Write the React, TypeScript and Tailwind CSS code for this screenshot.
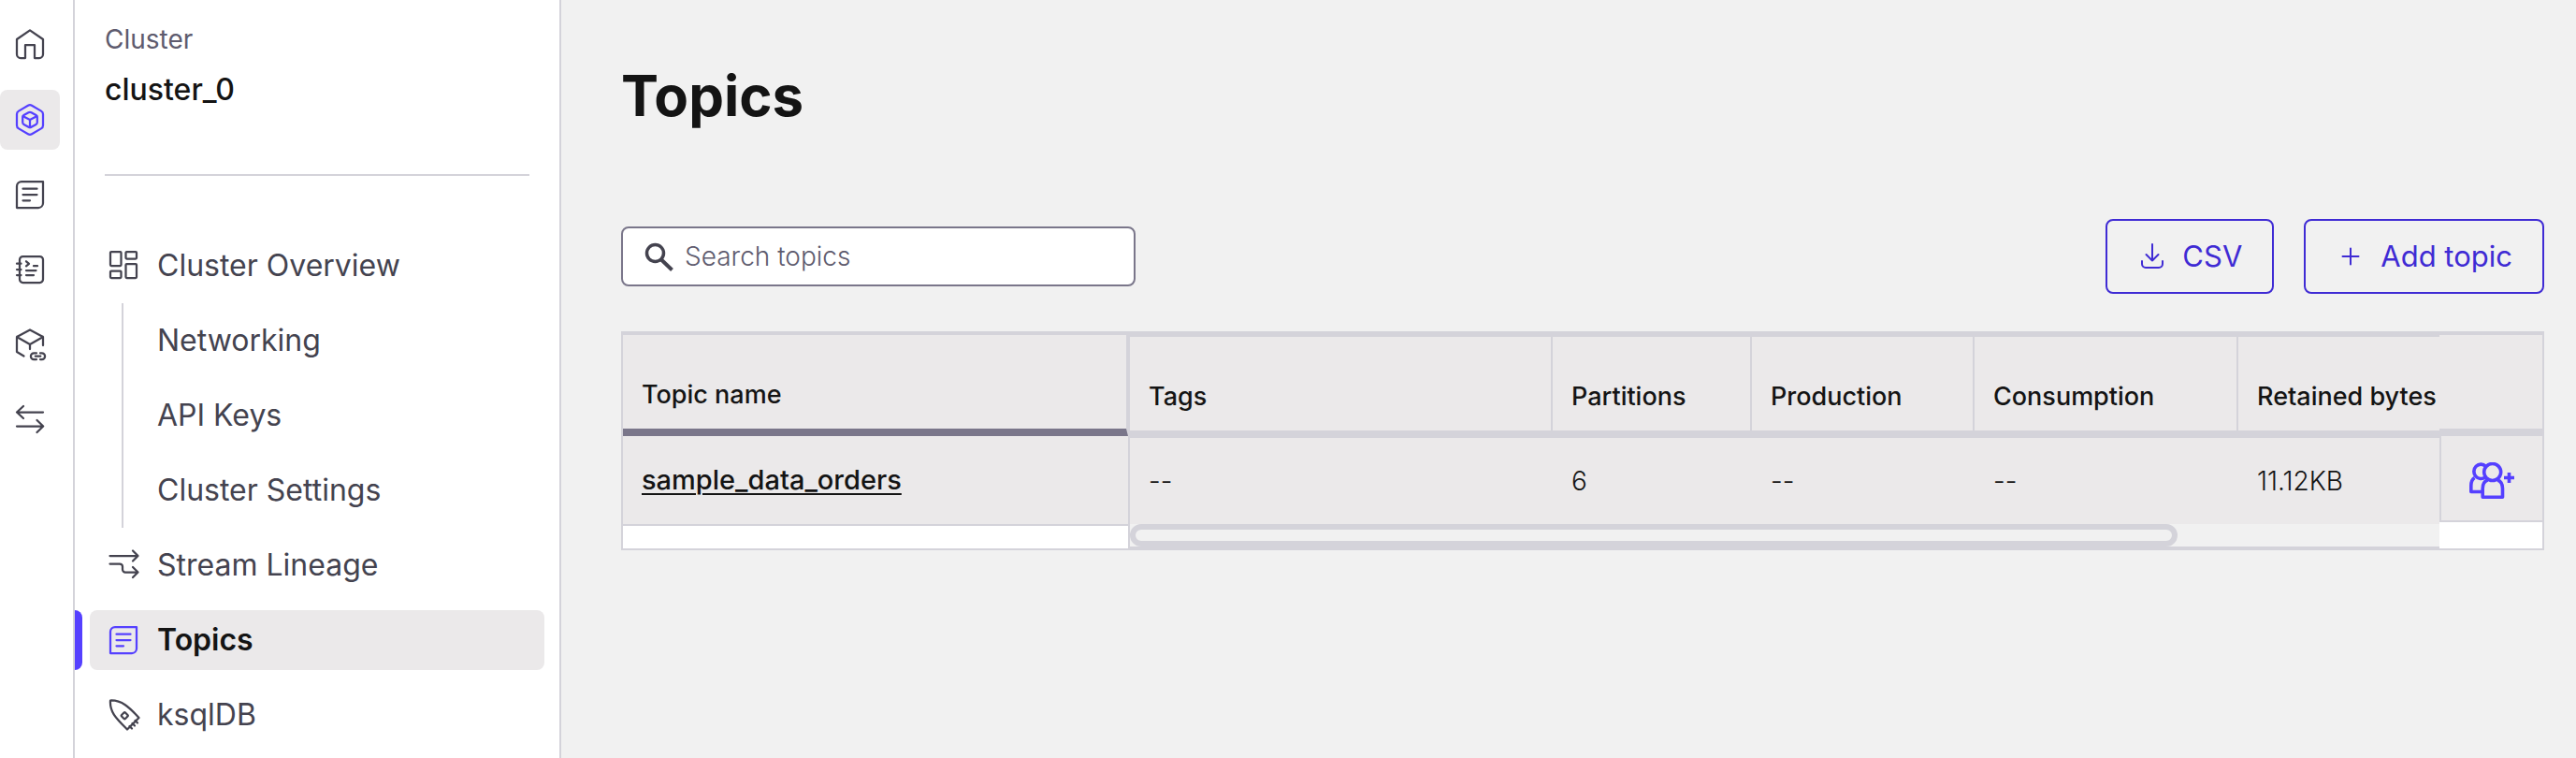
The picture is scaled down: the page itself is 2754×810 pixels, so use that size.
import { useState } from "react";
import type { ReactNode } from "react";

type IconProps = { children: ReactNode };

function Icon({ children }: IconProps) {
  return (
    <svg
      viewBox="0 0 32 32"
      fill="none"
      stroke="currentColor"
      strokeWidth={2.25}
      strokeLinecap="round"
      strokeLinejoin="round"
      className="h-8 w-8 shrink-0 overflow-visible"
      aria-hidden="true"
    >
      {children}
    </svg>
  );
}

const HomeIcon = () => (
  <Icon>
    <path d="M11 30H6a4 4 0 0 1-4-4V10L16 .3 30 10v16a4 4 0 0 1-4 4h-5V16H11z" />
  </Icon>
);

const ClusterIcon = () => (
  <Icon>
    <path d="M14 .8a4 4 0 0 1 4 0l10 5.8a4 4 0 0 1 2 3.5v11.8a4 4 0 0 1-2 3.5l-10 5.8a4 4 0 0 1-4 0L4 25.4a4 4 0 0 1-2-3.5V10.1a4 4 0 0 1 2-3.5z" />
    <path d="M14.5 8.2a3 3 0 0 1 3 0l5 2.8a2.5 2.5 0 0 1 1.3 2.2v5.6a2.5 2.5 0 0 1-1.3 2.2l-5 2.8a3 3 0 0 1-3 0l-5-2.8a2.5 2.5 0 0 1-1.3-2.2v-5.6a2.5 2.5 0 0 1 1.3-2.2z" />
    <path d="M8.8 12.2 16 16l7.2-3.8M16 16v8" />
  </Icon>
);

const TopicsIcon = () => (
  <Icon>
    <path d="M7 2h23v23a5 5 0 0 1-5 5H2V7a5 5 0 0 1 5-5z" />
    <path d="M8.5 9.7h15M8.5 16h15M8.5 22.3h7.5" />
  </Icon>
);

const NotebookIcon = () => (
  <Icon>
    <rect x="5" y="2" width="25" height="28" rx="3.5" />
    <path d="M2 9.7h4.5M2 16h4.5M2 22h4.5M12 7.3l3 2.5-3 2.5M20 12.2h4M12 17h10.5M12 22h8" />
  </Icon>
);

const CubeLinkIcon = () => (
  <Icon>
    <path d="M30 17V8L16 .5 2 8v16l7.5 4.5M2 8l14 8 14-8M16 16v5" />
    <path d="M23 25.3h-2.7a3.4 3.4 0 0 0 0 6.8H23M27 25.3h1.7a3.4 3.4 0 0 1 0 6.8H27M21.8 28.7h5.5" />
  </Icon>
);

const ArrowsIcon = () => (
  <Icon>
    <path d="M30 8.5H2M9 2 2 8.5 9 15M2 23.5h28M23.5 17l6.7 6.5-6.7 6.5" />
  </Icon>
);

const OverviewIcon = () => (
  <Icon>
    <rect x="2" y="1" width="11.5" height="15" rx="1" />
    <rect x="18.5" y="1" width="11.5" height="7.5" rx="1" />
    <rect x="2" y="21.5" width="11.5" height="7.5" rx="1" />
    <rect x="18.5" y="14" width="11.5" height="15" rx="1" />
  </Icon>
);

const LineageIcon = () => (
  <Icon>
    <path d="M1.5 6h30M26 .5 31.5 6 26 11.5M1.5 14.5H12a3 3 0 0 1 3 3v3a3 3 0 0 0 3 3h13.5M26 18l5.5 5.5L26 29" />
  </Icon>
);

const RocketIcon = () => (
  <Icon>
    <path d="M2 .5C1 13 8.5 20 20 31.5L32.5 19C22 7.5 14 0 2 .5z" />
    <rect x="14.5" y="14" width="5.5" height="5.5" rx="1" transform="rotate(45 17.25 16.75)" />
    <path d="M22.5 28l2.5 2.5M25.5 25l2.5 2.5M28.5 22l2.5 2.5" />
  </Icon>
);

const DownloadIcon = () => (
  <Icon>
    <path d="M16 3v17.5M9.500 14l6.500 6.500 6.500-6.500M5 21v3a4 4 0 0 0 4 4h14a4 4 0 0 0 4-4v-3" strokeWidth={2} />
  </Icon>
);

const PlusIcon = () => (
  <Icon>
    <path d="M16 7.5v17M7.5 16h17" strokeWidth={2} />
  </Icon>
);

const SearchIcon = () => (
  <Icon>
    <circle cx="12.5" cy="12.5" r="9" strokeWidth={3.5} />
    <path d="M18.5 19l12 11.5" strokeWidth={4} strokeLinecap="butt" />
  </Icon>
);

const AddUsersIcon = () => (
  <svg
    viewBox="0 0 48 39"
    fill="none"
    stroke="currentColor"
    strokeWidth={3.6}
    strokeLinejoin="round"
    className="h-[39px] w-12"
    aria-hidden="true"
  >
    <circle cx="24.7" cy="10.5" r="9" />
    <path d="M17.5 4.2a7.5 7.7 0 1 0-.5 11.7" />
    <path d="M19.5 19c-4 1.500-5.300 4.800-5.300 9v9.200h21.300V28c0-4.200-1.300-7.500-5.300-9" />
    <path d="M5.500 16.500c-3 2-3.700 5-3.700 8.500v6.500h12.500" />
    <path d="M42.500 11v11M37 16.500h11" />
  </svg>
);

const railItems = [
  { label: "Home", icon: <HomeIcon /> },
  { label: "Environments", icon: <ClusterIcon />, active: true },
  { label: "Topics", icon: <TopicsIcon /> },
  { label: "Workspaces", icon: <NotebookIcon /> },
  { label: "Connections", icon: <CubeLinkIcon /> },
  { label: "Stream sharing", icon: <ArrowsIcon /> },
];

const subItems = ["Networking", "API Keys", "Cluster Settings"];

const columns = [
  { title: "Tags", width: "w-[452px]", value: "--" },
  { title: "Partitions", width: "w-[213px]", value: "6" },
  { title: "Production", width: "w-[238px]", value: "--" },
  { title: "Consumption", width: "w-[282px]", value: "--" },
  { title: "Retained bytes", width: "w-[568px]", value: "11.12KB" },
];

function Rail() {
  return (
    <nav aria-label="Main" className="flex w-20 shrink-0 flex-col gap-4 border-r-2 border-[#d4d3da] bg-white pt-4 pr-3.5">
      {railItems.map((item) => (
        <a
          key={item.label}
          href="#"
          aria-label={item.label}
          className={`flex h-16 items-center justify-center rounded-lg ${
            item.active ? "bg-[#ebe9ea] text-[#5540ff]" : "text-[#44434f]"
          }`}
        >
          {item.icon}
        </a>
      ))}
    </nav>
  );
}

type NavItemProps = { label: string; icon: ReactNode; active?: boolean };

function NavItem({ label, icon, active }: NavItemProps) {
  return (
    <div className="flex gap-2 py-2">
      <div className={`w-2 rounded-r-lg ${active ? "bg-[#5540ff]" : ""}`} />
      <a
        href="#"
        aria-current={active ? "page" : undefined}
        className={`mr-4 flex h-16 flex-1 items-center gap-5 rounded-lg px-5 ${
          active ? "bg-[#ebe9ea] font-semibold text-[#141414]" : ""
        }`}
      >
        <span className={active ? "text-[#5540ff]" : ""}>{icon}</span>
        {label}
      </a>
    </div>
  );
}

function Sidebar() {
  return (
    <aside className="w-[520px] shrink-0 border-r-2 border-[#d4d3da] bg-white">
      <div className="mx-8 border-b-2 border-[#d4d3da] pt-5 pb-[68px]">
        <p className="text-[28px] leading-11 text-[#5e5b6e]">Cluster</p>
        <p className="mt-2.5 text-[32px] leading-11 font-medium text-[#141414]">cluster_0</p>
      </div>
      <nav aria-label="Cluster" className="pt-14 text-[32px] leading-10 text-[#44434f]">
        <NavItem label="Cluster Overview" icon={<OverviewIcon />} />
        <ul className="ml-[50px] border-l-2 border-[#d4d3da]">
          {subItems.map((label) => (
            <li key={label} className="flex h-20 items-center pl-9">
              <a href="#">{label}</a>
            </li>
          ))}
        </ul>
        <NavItem label="Stream Lineage" icon={<LineageIcon />} />
        <NavItem label="Topics" icon={<TopicsIcon />} active />
        <NavItem label="ksqlDB" icon={<RocketIcon />} />
      </nav>
    </aside>
  );
}

function TopicsTable() {
  return (
    <div className="flex border-2 border-[#d4d3da] bg-white text-[28px] leading-9 text-[#141414]">
      <div className="w-[542px] shrink-0 border-r-2 border-[#d4d3da]">
        <table className="w-full border-separate border-spacing-0 text-left">
          <thead>
            <tr>
              <th className="h-[110px] border-t-2 border-r-2 border-b-8 border-t-[#d4d3da] border-r-[#d4d3da] border-b-[#7a768a] bg-[#ebe9ea] px-5 pb-[18px] align-bottom text-[27px] font-medium">
                Topic name
              </th>
            </tr>
          </thead>
          <tbody>
            <tr>
              <td className="h-24 border-b-2 border-[#d4d3da] bg-[#ebe9ea] px-5 text-[29px] font-medium">
                <a href="#" className="underline decoration-2 underline-offset-4">
                  sample_data_orders
                </a>
              </td>
            </tr>
          </tbody>
        </table>
      </div>

      <div className="min-w-0 flex-1 overflow-hidden">
        <table className="w-[1753px] table-fixed border-separate border-spacing-0 text-left">
          <thead>
            <tr>
              {columns.map((col) => (
                <th
                  key={col.title}
                  className={`h-28 border-t-4 border-r-2 border-b-8 border-[#d4d3da] bg-[#ebe9ea] px-5 pb-[18px] align-bottom text-[27px] font-medium ${col.width}`}
                >
                  {col.title}
                </th>
              ))}
            </tr>
          </thead>
          <tbody>
            <tr>
              {columns.map((col) => (
                <td key={col.title} className="h-[92px] bg-[#ebe9ea] px-5 font-light">
                  {col.value}
                </td>
              ))}
            </tr>
          </tbody>
        </table>
        <div className="border-b-2 border-[#d4d3da] bg-[#f1f1f1]">
          <div className="h-6 w-4/5 rounded-full border-[6px] border-[#d4d3da]" />
        </div>
      </div>

      <div className="w-[110px] shrink-0">
        <table className="w-full border-separate border-spacing-0">
          <thead>
            <tr>
              <th aria-label="Actions" className="h-[110px] border-t-2 border-b-8 border-[#d4d3da] bg-[#ebe9ea]" />
            </tr>
          </thead>
          <tbody>
            <tr>
              <td className="h-[92px] border-b-2 border-l-2 border-[#d4d3da] bg-[#ebe9ea] pt-1 pl-[30px] align-middle">
                <button type="button" aria-label="Request access" className="flex text-[#5540ff]">
                  <AddUsersIcon />
                </button>
              </td>
            </tr>
          </tbody>
        </table>
      </div>
    </div>
  );
}

export default function App() {
  const [search, setSearch] = useState("");

  return (
    <div className="flex min-h-screen bg-[#f1f1f1] font-['Inter',sans-serif]">
      <Rail />
      <Sidebar />
      <main className="min-w-0 flex-1 px-16 pt-[62px] pr-[34px]">
        <h1 className="text-[60px] leading-20 font-bold text-[#141414]">Topics</h1>

        <div className="mt-[92px] flex items-center justify-between">
          <label className="flex h-16 w-[550px] items-center gap-3 rounded-lg border-2 border-[#7a768a] bg-white px-[22px] text-[#44434f]">
            <SearchIcon />
            <input
              type="text"
              aria-label="Search topics"
              placeholder="Search topics"
              value={search}
              onChange={(e) => setSearch(e.target.value)}
              className="min-w-0 flex-1 text-[28px] leading-9 font-light outline-none placeholder:text-[#5e5b6e]"
            />
          </label>
          <div className="flex gap-8 text-[31px] text-[#3f2bd4]">
            <button type="button" className="flex h-20 items-center gap-4 rounded-lg border-2 border-[#3f2bd4] px-8">
              <DownloadIcon />
              CSV
            </button>
            <button type="button" className="flex h-20 items-center gap-4 rounded-lg border-2 border-[#3f2bd4] px-8">
              <PlusIcon />
              Add topic
            </button>
          </div>
        </div>

        <div className="mt-10">
          <TopicsTable />
        </div>
      </main>
    </div>
  );
}
